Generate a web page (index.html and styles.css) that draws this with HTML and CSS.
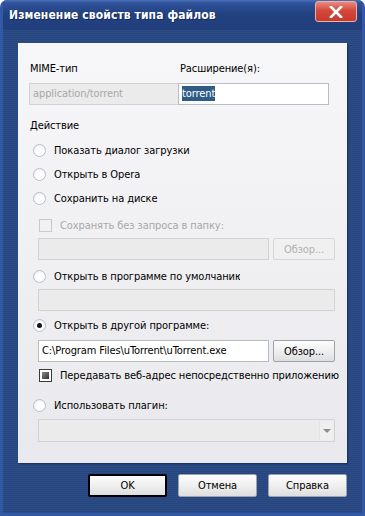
FILE: index.html
```html
<!DOCTYPE html>
<html lang="ru">
<head>
  <meta charset="UTF-8" />
  <title>Изменение свойств типа файлов</title>
  <link rel="stylesheet" href="styles.css">
</head>
<body>

  <div class="window">
    <!-- Title bar -->
    <div class="titlebar">
      <span class="title">Изменение свойств типа файлов</span>
      <span class="close">
        <svg width="14" height="12" viewBox="0 0 14 12"><path d="M2 1 L12 11 M12 1 L2 11" stroke="#fff" stroke-width="2.6" stroke-linecap="square"/></svg>
      </span>
    </div>

    <div class="client">
      <div class="panel">
        <div class="pair">
          <span class="label">MIME-тип</span>
          <span class="label">Расширение(я):</span>
        </div>
        <div class="pair fields">
          <div class="input disabled-field"><span class="dim">application/torrent</span></div>
          <div class="input"><span class="selected">torrent</span></div>
        </div>

        <div class="label section">Действие</div>

        <div class="opt first"><span class="radio"></span>Показать диалог загрузки</div>
        <div class="opt"><span class="radio"></span>Открыть в Opera</div>
        <div class="opt"><span class="radio"></span>Сохранить на диске</div>
        <div class="opt sub dim"><span class="check off"></span>Сохранять без запроса в папку:</div>
        <div class="line sub tight">
          <div class="input disabled-field grow"></div>
          <div class="btn small disabled">Обзор...</div>
        </div>

        <div class="opt gap4"><span class="radio"></span><span class="clip">Открыть в программе по умолчанию</span></div>
        <div class="line sub tight">
          <div class="input disabled-field grow"></div>
        </div>

        <div class="opt gap2"><span class="radio on"></span>Открыть в другой программе:</div>
        <div class="line sub gap3">
          <div class="input grow">C:\Program Files\uTorrent\uTorrent.exe</div>
          <div class="btn small">Обзор...</div>
        </div>
        <div class="opt sub tight"><span class="check on"></span><span>Передавать веб-адрес непосредственно приложению</span></div>

        <div class="opt gap6"><span class="radio"></span>Использовать плагин:</div>
        <div class="line sub gap2">
          <div class="input disabled-field grow select"><span class="arrow"></span></div>
        </div>
      </div>

      <div class="actions">
        <div class="btn default">OK</div>
        <div class="btn">Отмена</div>
        <div class="btn">Справка</div>
      </div>
    </div>
  </div>

</body>
</html>
```

FILE: styles.css
```css
body {
  margin: 0;
  font-family: 'DejaVu Sans Condensed', 'DejaVu Sans', sans-serif;
  font-stretch: condensed;
  font-size: 11px;
  letter-spacing: -0.1px;
  color: #000;
  background: #fff;
}

.window {
  width: 365px;
  height: 516px;
  box-sizing: border-box;
  border: 3px solid #3159a6;
  border-top: none;
  border-radius: 7px 7px 0 0;
  background: repeating-linear-gradient(#2b4c87 0 1px, #27467e 1px 2px);
  display: flex;
  flex-direction: column;
  overflow: hidden;
}

/* Title bar */
.titlebar {
  height: 30px;
  margin: 0 -3px;
  padding: 0 8px 0 9px;
  display: flex;
  align-items: flex-start;
  justify-content: space-between;
  background: linear-gradient(#4a70bb 0, #2f529a 3px, #22417f 14px, #213f7c 30px);
  border-radius: 7px 7px 0 0;
}

.title {
  margin-top: 8px;
  color: #fff;
  font-weight: bold;
  font-size: 12px;
  letter-spacing: 0.1px;
  text-shadow: 1px 1px 0 #142a5a;
}

.close {
  width: 40px;
  height: 19px;
  margin-top: 1px;
  border: 1px solid #f0b0a8;
  border-radius: 3px;
  background: linear-gradient(#e88a7e, #d4483c 45%, #c73a2e);
  display: flex;
  align-items: center;
  justify-content: center;
}

.client {
  padding: 13px 15px 0 15px;
  display: flex;
  flex-direction: column;
}

/* White panel */
.panel {
  height: 420px;
  box-sizing: border-box;
  padding: 18px 0 0 11px;
  background: linear-gradient(#f7f7f9, #e9e9ed);
  box-shadow: 1px 1px 0 #1b3465, 2px 2px 0 #22407a;
  overflow: hidden;
}

.pair {
  display: grid;
  grid-template-columns: 150px 150px;
}

.label {
  line-height: 15px;
  padding-left: 1px;
}

.fields {
  margin-top: 7px;
}

.input {
  height: 22px;
  box-sizing: border-box;
  border: 1px solid #b7bdc7;
  background: #fff;
  padding: 0 3px;
  line-height: 20px;
  white-space: nowrap;
  overflow: hidden;
}

.disabled-field {
  background: #ebebeb;
  border-color: #d2d2d2;
}

.fields .input + .input {
  margin-left: -1px;
}

.dim {
  color: #a8a8a8;
}

.selected {
  background: #2f5c87;
  color: #fff;
  padding: 1px 0;
}

.section {
  margin-top: 13px;
}

/* Option rows */
.opt {
  height: 24px;
  display: flex;
  align-items: center;
  gap: 8px;
  padding-left: 4px;
  white-space: nowrap;
}

.opt.first { margin-top: 5px; }
.opt.sub { padding-left: 10px; margin-top: 3px; }
.opt.sub.tight { margin-top: 1px; }
.gap2 { margin-top: 2px; }
.gap3 { margin-top: 3px; }
.gap4 { margin-top: 4px; }
.gap6 { margin-top: 6px; }

.clip {
  max-width: 186px;
  overflow: hidden;
}

.radio {
  width: 13px;
  height: 13px;
  box-sizing: border-box;
  border: 1px solid #b8bdc6;
  border-radius: 50%;
  background: radial-gradient(circle at 60% 65%, #fff 40%, #e4e6ea);
  position: relative;
  flex: none;
}

.radio.on::after {
  content: '';
  position: absolute;
  left: 3px;
  top: 3px;
  width: 5px;
  height: 5px;
  border-radius: 50%;
  background: #151515;
}

.check {
  width: 13px;
  height: 13px;
  box-sizing: border-box;
  border: 1px solid #c9c9c9;
  background: #f1f1f1;
  position: relative;
  flex: none;
}

.check.on {
  border-color: #3a3a3a;
  background: #fff;
}

.check.on::after {
  content: '';
  position: absolute;
  left: 2px;
  top: 2px;
  width: 7px;
  height: 7px;
  background: linear-gradient(135deg, #8a8a8a, #2e2e2e);
}

/* Field lines */
.line {
  display: flex;
  gap: 4px;
  width: 297px;
}

.line.sub {
  margin-left: 9px;
}

.line.tight {
  margin-top: 1px;
}

.grow {
  flex: 1;
}

.select {
  position: relative;
  height: 23px;
}

.arrow {
  position: absolute;
  right: 1px;
  top: 1px;
  width: 13px;
  height: 19px;
  border-left: 1px solid #e2e2e2;
  background: #efefef;
}

.arrow::after {
  content: '';
  position: absolute;
  left: 3px;
  top: 8px;
  border-left: 4px solid transparent;
  border-right: 4px solid transparent;
  border-top: 4px solid #8e8e8e;
}

/* Buttons */
.btn {
  width: 79px;
  height: 23px;
  box-sizing: border-box;
  border: 1px solid #9ea3ab;
  border-radius: 2px;
  background: linear-gradient(#fdfdfd, #ececec 60%, #dedede);
  display: flex;
  align-items: center;
  justify-content: center;
}

.btn.small {
  width: 62px;
  height: 22px;
}

.btn.disabled {
  color: #b0b0b0;
  border-color: #d6d6d6;
  background: #f0f0f0;
}

.btn.default {
  border: 2px solid #000;
}

.actions {
  margin-top: 11px;
  display: flex;
  justify-content: flex-end;
  gap: 11px;
}
```
